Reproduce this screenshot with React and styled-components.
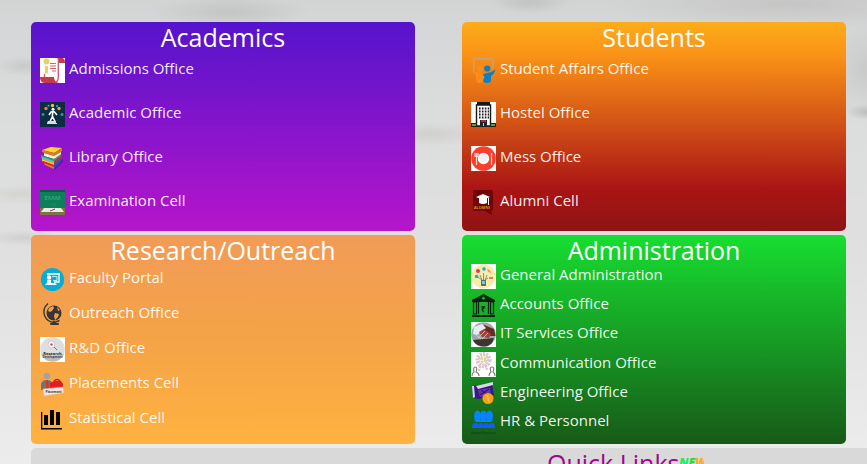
import React from "react";
import styled, { createGlobalStyle } from "styled-components";

const GlobalStyle = createGlobalStyle`
  * { box-sizing: border-box; }
  body {
    margin: 0;
    min-height: 100vh;
    overflow: hidden;
    font-family: "Open Sans", sans-serif;
    font-size: 15px;
    color: #fff;
    background:
      radial-gradient(ellipse 80px 16px at 230px 12px, rgba(176, 176, 174, 0.45), transparent),
      radial-gradient(ellipse 40px 12px at 530px 2px, rgba(176, 178, 178, 0.5), transparent),
      radial-gradient(ellipse 180px 26px at 790px 4px, rgba(188, 188, 185, 0.6), transparent),
      radial-gradient(ellipse 40px 50px at 867px 70px, rgba(186, 188, 184, 0.5), transparent),
      radial-gradient(ellipse 22px 8px at 867px 112px, rgba(160, 162, 160, 0.5), transparent),
      radial-gradient(ellipse 30px 10px at 24px 66px, rgba(190, 192, 190, 0.6), transparent),
      radial-gradient(ellipse 60px 12px at 430px 134px, rgba(196, 196, 192, 0.5), transparent),
      radial-gradient(ellipse 40px 10px at 20px 194px, rgba(202, 202, 194, 0.5), transparent),
      radial-gradient(ellipse 40px 8px at 24px 238px, rgba(192, 192, 190, 0.5), transparent),
      linear-gradient(180deg, #d2d4d4 0, #d5d6d7 20px, #dcdddd 130px, #e0e0e1 260px, #ededed 100%);
  }
`;

const Page = styled.main`
  padding: 22px 0 0 31px;
`;

const Cards = styled.div`
  display: grid;
  grid-template-columns: 1fr 1fr;
  gap: 4px 47px;
  padding-right: 21px;
`;

const Card = styled.section`
  display: flex;
  flex-direction: column;
  padding: 0 9px 7px;
  border-radius: 5px;
  background: ${(p) => p.$fill};
`;

const Title = styled.h2`
  height: 27px;
  margin: 0;
  font-size: 25px;
  font-weight: 400;
  line-height: 31px;
  text-align: center;
`;

const List = styled.ul`
  display: grid;
  grid-auto-rows: 1fr;
  min-height: 175px;
  margin: 0;
  padding: 0;
  list-style: none;
`;

const Item = styled.li`
  display: flex;
  align-items: center;
`;

const OfficeLink = styled.a`
  display: flex;
  align-items: flex-start;
  gap: 4px;
  color: rgba(255, 255, 255, 0.94);
  line-height: 21px;
  text-decoration: none;
`;

const Icon = styled.svg`
  width: 25px;
  height: 25px;
  flex: none;
`;

const QuickLinks = styled.section`
  margin-top: 4px;
  padding-left: calc(50% + 98px);
  border-radius: 5px 0 0 0;
  background: #d9d9d9;
`;

const QuickTitle = styled.h2`
  display: flex;
  margin: 0;
  font-size: 25px;
  font-weight: 400;
  line-height: 31px;
  color: #a0058c;
`;

const NewBadge = styled.svg`
  width: 25px;
  height: 20px;
  margin-top: 7px;
`;

const icons = {
  admissions: (
    <>
      <path fill="#fff" d="M0 0h25v25H0z" />
      <path fill="#c23c4c" d="M17 0h5q3 0 3 5h-6V3q0-2-2-3zM0 19h14q0 5 5 6H5q-5 0-5-6z" />
      <path fill="none" stroke="#d0606c" strokeWidth="1.4" d="M18.300 1v18q0 5-3.500 5M4.500 16v3" />
      <path stroke="#cf6470" strokeWidth="1.100" d="M10 5.500h6M10 8h6M10 10.500h6M12 13h4" />
      <circle cx="6.500" cy="3.500" r="3" fill="#e8d45c" />
      <path fill="#e8d45c" d="M5 8h3v8l-1.500-1L5 16z" />
    </>
  ),
  academic: (
    <>
      <path fill="#0b2e42" d="M0 0h25v25H0z" />
      <circle cx="12.500" cy="3.500" r="1.700" fill="#f2b75b" />
      <circle cx="6" cy="6.500" r="1.700" fill="#e87a4c" />
      <circle cx="19" cy="6.500" r="1.700" fill="#e8a04c" />
      <circle cx="3" cy="12.500" r="1.400" fill="#2f9a86" />
      <circle cx="22" cy="12.500" r="1.600" fill="#2f9a86" />
      <circle cx="8.500" cy="3.800" r="1" fill="#39b6a0" />
      <circle cx="17" cy="4" r="1" fill="#39b6a0" />
      <circle cx="13" cy="7.200" r="1.500" fill="#fff" />
      <path fill="none" stroke="#fff" strokeWidth="1.600" d="M9 13l2-3 3-.5 3 3.500M12.800 9.500l-.5 5.500-2.300 4.500M12.500 14.500l2.500 5" />
      <path fill="#d5dfe2" d="M8 19h8v2h1v1H7v-1z" />
    </>
  ),
  library: (
    <>
      <path fill="#4a167f" opacity=".5" d="M13 23l10-11v4l-8 8z" />
      <path fill="#ffd531" d="M2 4L11 1l11 1-8 5z" />
      <path fill="#e87912" d="M2 4l12 3 8-5v3l-8 5L2 6z" />
      <path fill="#fff4c8" d="M4 7l10 3 7-4v3l-7 4-10-3z" />
      <path fill="#2b9a8c" d="M1 9l13 4 7-5v3l-7 6L1 12z" />
      <path fill="#6fc5a5" d="M2 11l12 4v2L2 13z" />
      <path fill="#f4c837" d="M2 13l12 4v2L2 15z" />
      <path fill="#e32614" d="M14 15l8-6v3l-8 7zM3 15l11 4v2L3 17z" />
      <path fill="#2555c5" d="M14 18l7-6v3l-7 7z" />
      <path fill="#ef7c18" d="M4 17l10 4v2L5 19z" />
    </>
  ),
  exam: (
    <>
      <path fill="#0d8059" d="M0 0h25v18H0z" />
      <path fill="#0a5a43" d="M0 0h25v2H0z" />
      <path fill="#7d7440" d="M0 18h25v7H0z" />
      <path fill="#e5ebe8" d="M4 18h17l3 4H1z" />
      <path stroke="#a33" d="M10 21l5-2" />
      <text x="12.500" y="10" textAnchor="middle" fontSize="6" fill="#3cb78c">EXAM</text>
      <text x="12.500" y="16" textAnchor="middle" fontSize="4" fill="#229a70">123</text>
    </>
  ),
  student: (
    <>
      <path fill="none" stroke="#c2a77e" strokeWidth="1.300" d="M2.700 14V3q0-2.300 2-2.300h15q2.300 0 2.300 2.300v8" />
      <circle cx="9" cy="10.500" r="3.200" fill="#ff8a1e" />
      <circle cx="16.200" cy="10.500" r="3.100" fill="#0b80c4" />
      <path fill="#ff8a1e" d="M1 12q3 3 7 2.500 4 0 6 .5l-1 2v5q-1 3-4 3-4 0-4-4v-4q-3-1-4-5z" />
      <path fill="#0b80c4" d="M12 16q5-1 8-2 3-1 4-3 0 5-4 7v4q0 3-4 3t-4-3q2-2 1-4-1-1-1-2z" />
    </>
  ),
  hostel: (
    <>
      <path fill="#fff" d="M0 0h25v25H0z" />
      <path fill="#181818" d="M6 0h13v3H6z" />
      <path fill="#fff" stroke="#181818" strokeWidth="1.400" d="M5.500 3h14v21h-14z" />
      <path stroke="#181818" strokeWidth="2" strokeDasharray="1.600 1.300" d="M8 6.500h10M8 9.500h10M8 12.500h10M8 15.500h10" />
      <path fill="#222" d="M9 18h7v7H9z" />
      <path fill="#b22d3b" d="M10 18h5v2h-5z" />
      <path fill="#bcd4d5" d="M12 21h1v4h-1z" />
      <path fill="#222" d="M0 21h6v4H0zM19 21h6v4h-6zM0 24h25v1H0z" />
      <path fill="#6b9a2e" d="M1 22h4v2H1zM20 22h4v2h-4z" />
    </>
  ),
  mess: (
    <>
      <path fill="#fff" d="M0 0h25v25H0z" />
      <circle cx="12.500" cy="12.500" r="12.300" fill="#fb3d2b" />
      <circle cx="12.500" cy="12.500" r="5.700" fill="#fff" />
      <circle cx="12.500" cy="12.500" r="4" fill="#f1f1f1" />
      <path fill="none" stroke="#ffd8d0" strokeWidth="1.200" d="M5.500 7v12M4 7v3.500h3V7M20.500 7v12" />
    </>
  ),
  alumni: (
    <>
      <path fill="#700407" d="M4 0h16q2 0 2 2v17q0 2-2 2l1 4-7-4H4q-2 0-2-2V2q0-2 2-2z" />
      <path fill="#fff" d="M5 7l7-3 7 3-3 1.300V13q-4 2-8 0V8.300z" />
      <path stroke="#fff" strokeWidth="1" d="M17.500 8v7" />
      <text x="11" y="19" textAnchor="middle" fontSize="4" fontWeight="700" fill="#d99612">ALUMNI</text>
    </>
  ),
  faculty: (
    <>
      <circle cx="12.500" cy="12.500" r="11.600" fill="#06aed5" />
      <path fill="none" stroke="#fff" strokeWidth="1.300" d="M7 7h13M19 7v8h-5" />
      <path fill="none" stroke="#b7edf7" strokeWidth="1" d="M12 9.500h5v4h-4" />
      <circle cx="9" cy="10.500" r="2.200" fill="#fff" />
      <path fill="#fff" d="M5 18l2-2v-3h4v3h4l2 2z" />
    </>
  ),
  globe: (
    <>
      <circle cx="14" cy="11" r="7.500" fill="#363638" />
      <path fill="none" stroke="#363638" strokeWidth="1.400" d="M8 1.500Q2 7 4.500 13.500t10 7l5-2M14 19v3" />
      <path fill="#363638" d="M10 21h9q0 2-1 2h-7q-1 0-1-2z" />
      <path fill="#f1a14b" d="M9 6l4-2 1 2-2 3-2 1-2-1zM15 11l4 1-1 3-3 3-1-4zM17 5l3 3-2 1z" />
    </>
  ),
  research: (
    <>
      <path fill="#fff" d="M0 0h25v25H0z" />
      <circle cx="12.500" cy="12.500" r="12.300" fill="#dedede" />
      <path fill="#bcbcbc" d="M1 17q11 3 23 0-3 7.500-11.500 7.500T1 17z" />
      <circle cx="11.500" cy="7.500" r="3.500" fill="#fafafa" stroke="#bbb" strokeWidth=".7" />
      <circle cx="11.500" cy="7.500" r="1.200" fill="#dc4060" />
      <path stroke="#777" d="M14 10l3 3" />
      <text x="12.500" y="17.500" textAnchor="middle" fontSize="4" fontWeight="700" fill="#222">Research</text>
      <text x="12.500" y="21" textAnchor="middle" fontSize="3" fontWeight="700" fill="#444">Development</text>
    </>
  ),
  placement: (
    <>
      <circle cx="7" cy="4" r="3.300" fill="#a6a39d" />
      <path fill="#77736f" d="M1 18V12q1-4 6-4t5 4v6z" />
      <path fill="#d93623" d="M6 8h2l1 9H6z" />
      <path fill="none" stroke="#bb1a1a" strokeWidth="1.300" d="M14 9q3-3 6 0" />
      <path fill="#e61c22" d="M10 11l4-2h7l2 3v5H10z" />
      <path fill="#f3e6df" stroke="#d3b7a5" strokeWidth=".5" d="M3 17l20-2 1 6-20 3z" />
      <text x="13.500" y="21" textAnchor="middle" fontSize="3" fontWeight="700" fill="#333">Placement</text>
    </>
  ),
  statistics: (
    <path fill="#050505" d="M1 5h1.300v16H22v1.500H1zM4 8h4v10H4zM10 3h4v15h-4zM16 5h4v13h-4z" />
  ),
  general: (
    <>
      <path fill="#fff" d="M0 0h25v25H0z" />
      <circle cx="12.500" cy="12.500" r="12" fill="#f5eeaa" />
      <circle cx="7" cy="7" r="2" fill="#e83555" />
      <circle cx="13" cy="5" r="1.800" fill="#25a4c4" />
      <path fill="#ef9f64" d="M16 5l3 1 1 3-3-1z" />
      <path fill="#36adb0" d="M4 11h3l1 3H4z" />
      <path fill="#e07e56" d="M18 13h4v2h-4z" />
      <path fill="none" stroke="#777" strokeWidth=".8" d="M12.500 17V9M9 11l2 5M16 11l-2 5M8 14l3 2M17 14l-3 2" />
      <path fill="#53717a" d="M10 16h5v6h-5z" />
      <path fill="#75c6df" d="M11 17h3v3h-3z" />
    </>
  ),
  bank: (
    <>
      <path fill="#07220c" fillRule="evenodd" d="M12.500 1L24 7v2H1V7zM12.500 3.500l-2 1.700 2 1.700 2-1.700zM1 22h23v2H1z" />
      <path fill="none" stroke="#07220c" strokeWidth="1.200" d="M2.500 9v12h3V9zM7.500 9v12M17.500 9v12M19.500 9v12h3V9z" />
      <text x="12.500" y="19" textAnchor="middle" fontSize="8" fontWeight="700" fill="#07220c">₹</text>
    </>
  ),
  it: (
    <>
      <path fill="#fff" d="M0 0h25v25H0z" />
      <circle cx="12.500" cy="12.500" r="12.300" fill="#9fa8b1" />
      <path fill="#6b2921" d="M13 3l10 4 1.500 7L14 14l-6-5z" />
      <path fill="#e5edf2" d="M3 5l8-3 4 4-9 7-4-1z" />
      <path fill="#a0433c" d="M8 10l5-3 7 5-2 4-7-1z" />
      <path fill="#3d3432" d="M2 18l21-2q-2 8.500-10 8.500T2 18z" />
      <path stroke="#e2c4b8" strokeWidth=".8" d="M7 16l7-7M11 17l6-6M5 13l5 4" />
    </>
  ),
  communication: (
    <>
      <path fill="#fff" d="M0 0h25v25H0z" />
      <circle cx="12.500" cy="8" r="6" fill="none" stroke="#edc0cb" strokeWidth="4" strokeDasharray="2 1" />
      <circle cx="12.500" cy="8" r="4.500" fill="none" stroke="#a9d3de" strokeWidth="3" strokeDasharray="1 2" />
      <circle cx="12.500" cy="8" r="2" fill="none" stroke="#e3d08b" strokeWidth="3" strokeDasharray="2 1" />
      <path stroke="#edb3c1" strokeWidth="2" strokeDasharray="2 1" d="M9 14l-1 5M15 13l1 5" />
      <path fill="none" stroke="#777" strokeWidth="1.100" d="M1 24q0-3 2-4-1-5 1-5 3 0 1 5 3 1 3 4M18 24q0-3 2-4-2-5 1-5 3 0 1 5 2 1 2 4" />
    </>
  ),
  engineering: (
    <>
      <path fill="#3b1785" d="M1 5l20-2 2 11-15 4-6-1z" />
      <path fill="#d9d9e6" d="M1 5h2l1 11-2 1zM5 5l17-4v3L7 8z" />
      <path fill="#6534ae" d="M7 9l12-2 1 7-11 2z" />
      <path stroke="#2a0c68" d="M9 14l9-6M10 9l7 5" />
      <circle cx="17" cy="17.500" r="5.500" fill="#f8a119" />
      <path stroke="#ffc04c" strokeWidth="1.500" d="M16 14l2 7" />
    </>
  ),
  hr: (
    <>
      <ellipse cx="6.500" cy="6" rx="3.500" ry="5.500" fill="#0784ff" />
      <ellipse cx="12.500" cy="6" rx="3.500" ry="5.500" fill="#0784ff" />
      <ellipse cx="18.500" cy="6" rx="3.500" ry="5.500" fill="#0784ff" />
      <path fill="#0784ff" d="M3 10h19l-2 2H5z" />
      <path fill="#105cff" d="M1 18q0-5 3.500-5T8 18zM7 18q0-5 3-5t3 5zM12 18q0-5 3-5t3 5zM17 18q0-5 3.500-5t3.500 5z" />
      <text x="12.500" y="24" textAnchor="middle" fontSize="3" fill="#103014">Human Resources</text>
    </>
  ),
};

const sections = [
  {
    title: "Academics",
    fill: "linear-gradient(180deg, #5514cc, #b615ca)",
    items: [["Admissions Office", "admissions"], ["Academic Office", "academic"], ["Library Office", "library"], ["Examination Cell", "exam"]],
  },
  {
    title: "Students",
    fill: "linear-gradient(180deg, #fcad1a 0%, #fa9217 16%, #aa1414 80%, #8e1414 100%)",
    items: [["Student Affairs Office", "student"], ["Hostel Office", "hostel"], ["Mess Office", "mess"], ["Alumni Cell", "alumni"]],
  },
  {
    title: "Research/Outreach",
    fill: "linear-gradient(180deg, #f19b57, #f5a347 50%, #ffb240)",
    items: [["Faculty Portal", "faculty"], ["Outreach Office", "globe"], ["R&D Office", "research"], ["Placements Cell", "placement"], ["Statistical Cell", "statistics"]],
  },
  {
    title: "Administration",
    fill: "linear-gradient(180deg, #17de31, #175a18)",
    items: [["General Administration", "general"], ["Accounts Office", "bank"], ["IT Services Office", "it"], ["Communication Office", "communication"], ["Engineering Office", "engineering"], ["HR & Personnel", "hr"]],
  },
];

export default function App() {
  return (
    <>
      <GlobalStyle />
      <Page>
        <Cards>
          {sections.map((section) => (
            <Card key={section.title} $fill={section.fill}>
              <Title>{section.title}</Title>
              <List>
                {section.items.map(([label, icon]) => (
                  <Item key={label}>
                    <OfficeLink href="#">
                      <Icon viewBox="0 0 25 25" aria-hidden="true">{icons[icon]}</Icon>
                      {label}
                    </OfficeLink>
                  </Item>
                ))}
              </List>
            </Card>
          ))}
        </Cards>
        <QuickLinks>
          <QuickTitle>
            Quick Links
            <NewBadge viewBox="0 0 25 20" role="img" aria-label="New">
              <text x="0" y="12" fontSize="12" fontWeight="800" fontStyle="italic">
                <tspan fill="#11ef62">N</tspan>
                <tspan fill="#2be02b">E</tspan>
                <tspan fill="#ffac18">W</tspan>
              </text>
            </NewBadge>
          </QuickTitle>
        </QuickLinks>
      </Page>
    </>
  );
}
